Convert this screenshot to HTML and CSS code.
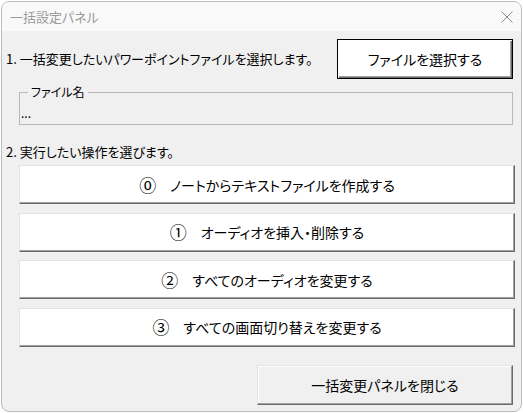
FILE: index.html
```html
<!DOCTYPE html>
<html lang="ja">
<head>
<meta charset="utf-8">
<title>一括設定パネル</title>
<link rel="stylesheet" href="styles.css">
</head>
<body>
<div class="window">
  <div class="titlebar">
    <span class="title">一括設定パネル</span>
    <svg class="close-x" width="12" height="12" viewBox="0 0 12 12"><path d="M0.5 0.5 L11.5 11.5 M11.5 0.5 L0.5 11.5" stroke="#8a8a8a" stroke-width="1" fill="none"/></svg>
  </div>
  <div class="body">
    <div class="row-select">
      <span class="label">1. 一括変更したいパワーポイントファイルを選択します。</span>
      <button class="btn btn-default">ファイルを選択する</button>
    </div>
    <fieldset class="group">
      <legend class="legend">ファイル名</legend>
      <div class="filename">...</div>
    </fieldset>
    <div class="label label-ops">2. 実行したい操作を選びます。</div>
    <div class="ops">
      <button class="btn btn-op"><span class="num">⓪</span>　ノートからテキストファイルを作成する</button>
      <button class="btn btn-op"><span class="num">①</span>　オーディオを挿入・削除する</button>
      <button class="btn btn-op"><span class="num">②</span>　すべてのオーディオを変更する</button>
      <button class="btn btn-op"><span class="num">③</span>　すべての画面切り替えを変更する</button>
    </div>
    <div class="footer">
      <button class="btn btn-close">一括変更パネルを閉じる</button>
    </div>
  </div>
</div>
</body>
</html>
```

FILE: styles.css
```css
html, body {
  margin: 0;
  padding: 0;
  background: #ffffff;
}
body {
  width: 523px;
  height: 413px;
  overflow: hidden;
  font-family: "Noto Sans CJK JP", "Noto Sans", sans-serif;
  font-size: 13px;
  color: #000;
  font-feature-settings: "palt" 1;
}
.window {
  box-sizing: border-box;
  margin: 1px 0 0 1px;
  width: 521px;
  height: 411px;
  border: 1px solid #bdbdbd;
  border-radius: 8px;
  background: #f0f0f0;
  overflow: hidden;
  display: flex;
  flex-direction: column;
}
.titlebar {
  height: 29px;
  flex: none;
  background: #f9f9f9;
  display: flex;
  align-items: center;
  justify-content: space-between;
  padding: 0 8px 0 8px;
}
.title {
  font-size: 13px;
  color: #9a9a9a;
  line-height: 16px;
}
.close-x {
  display: block;
  margin-top: 1px;
}
.body {
  padding: 0 8px 0 4px;
  display: flex;
  flex-direction: column;
}
.row-select {
  margin-top: 8px;
  display: flex;
  align-items: center;
  justify-content: space-between;
}
.label {
  line-height: 16px;
  white-space: nowrap;
}
.btn {
  font-family: inherit;
  font-size: 13px;
  font-feature-settings: "palt" 1;
  color: #000;
  background: #ffffff;
  box-sizing: border-box;
  border: 1px solid;
  border-color: #e3e3e3 #6a6a6a #6a6a6a #e3e3e3;
  box-shadow: inset -1px -1px 0 #a0a0a0, inset 1px 1px 0 #ffffff;
  border-radius: 0;
  padding: 0;
  margin: 0;
  line-height: 16px;
  text-align: center;
}
.btn-default {
  width: 176px;
  height: 40px;
  border: 1px solid #000;
  box-shadow: inset 1px 1px 0 #ffffff, inset -1px -1px 0 #6a6a6a, inset -2px -2px 0 #a0a0a0;
  font-size: 14px;
}
.group {
  margin: 5px 0 0 13px;
  padding: 0 0 3px 1px;
  border: 1px solid #b9b9b9;
  height: 41px;
  box-sizing: border-box;
  min-width: 0;
}
.legend {
  font-size: 12px;
  line-height: 16px;
  padding: 0 3px;
  margin-left: 7px;
}
.filename {
  font-size: 12px;
  line-height: 14px;
  margin-top: 6px;
}
.label-ops {
  margin-top: 19px;
}
.ops {
  margin: 5px 0 0 13px;
  display: flex;
  flex-direction: column;
  gap: 8.67px;
}
.btn-op {
  height: 39px;
  width: 496px;
  font-size: 14px;
}
.num {
  font-size: 17px;
  line-height: 16px;
  vertical-align: -1px;
}
.footer {
  margin-top: 18px;
  display: flex;
  justify-content: flex-end;
}
.btn-close {
  width: 256px;
  height: 40px;
  background: #f0f0f0;
  font-size: 14px;
}
```
